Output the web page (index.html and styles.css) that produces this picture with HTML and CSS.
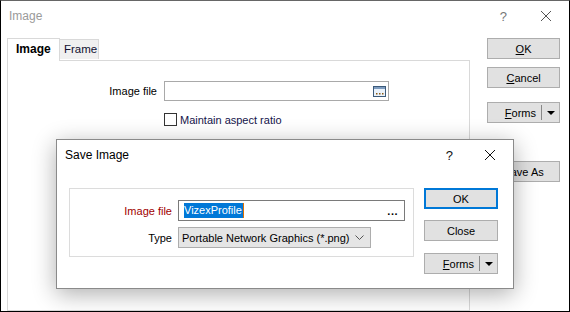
FILE: index.html
```html
<!DOCTYPE html>
<html lang="en">
<head>
  <meta charset="UTF-8" />
  <title>Image</title>
  <link rel="stylesheet" href="styles.css">
</head>
<body>
  <div class="window">
    <div class="titlebar">
      <span class="title">Image</span>
      <span class="help">?</span>
      <svg class="close-x" width="12" height="12" viewBox="0 0 12 12"><path d="M1 1L11 11M11 1L1 11" stroke="#555" stroke-width="1"/></svg>
    </div>

    <div class="main">
      <div class="tabs-area">
        <div class="tabs">
          <div class="tab active">Image</div>
          <div class="tab">Frame</div>
        </div>
        <div class="panel">
          <div class="field-row">
            <label class="field-label">Image file</label>
            <div class="file-input">
              <svg class="browse-icon" width="13" height="11" viewBox="0 0 13 11">
                <rect x="0.5" y="0.5" width="12" height="10" fill="#eaf2fb" stroke="#3c5a7a"/>
                <rect x="1" y="1" width="11" height="2" fill="#7e9cbf"/>
                <rect x="3" y="7" width="1.5" height="1.5" fill="#8a5a12"/>
                <rect x="6" y="7" width="1.5" height="1.5" fill="#8a5a12"/>
                <rect x="9" y="7" width="1.5" height="1.5" fill="#8a5a12"/>
              </svg>
            </div>
          </div>
          <div class="check-row">
            <span class="checkbox"></span>
            <span class="check-label">Maintain aspect ratio</span>
          </div>
        </div>
      </div>

      <div class="side-buttons">
        <div class="btn btn-ok"><u>O</u>K</div>
        <div class="btn btn-cancel"><u>C</u>ancel</div>
        <div class="split-btn">
          <span class="split-text"><u>F</u>orms</span>
          <span class="split-arrow"></span>
        </div>
        <div class="btn btn-saveas">Save As</div>
      </div>
    </div>

    <div class="modal">
      <div class="titlebar modal-titlebar">
        <span class="title modal-title">Save Image</span>
        <span class="help modal-help">?</span>
        <svg class="close-x" width="12" height="12" viewBox="0 0 12 12"><path d="M1 1L11 11M11 1L1 11" stroke="#111" stroke-width="1"/></svg>
      </div>
      <div class="modal-body">
        <div class="group">
          <div class="group-row">
            <label class="group-label required">Image file</label>
            <div class="text-input">
              <span class="selected">VizexProfile</span><span class="caret"></span>
              <span class="dots">...</span>
            </div>
          </div>
          <div class="group-row">
            <label class="group-label">Type</label>
            <div class="select">
              <span>Portable Network Graphics (*.png)</span>
              <svg class="chevron" width="9" height="5" viewBox="0 0 9 5"><path d="M0.5 0.5L4.5 4.5L8.5 0.5" fill="none" stroke="#555"/></svg>
            </div>
          </div>
        </div>
        <div class="modal-buttons">
          <div class="btn default">OK</div>
          <div class="btn">Close</div>
          <div class="split-btn modal-split">
            <span class="split-text"><u>F</u>orms</span>
            <span class="split-arrow"></span>
          </div>
        </div>
      </div>
    </div>
  </div>
</body>
</html>
```

FILE: styles.css
```css
* {
  margin: 0;
  padding: 0;
  box-sizing: border-box;
}

body {
  font-family: 'Liberation Sans', Arial, sans-serif;
  font-size: 11px;
  color: #000;
  background: #fff;
}

.window {
  position: relative;
  width: 570px;
  height: 312px;
  border: 1px solid #000;
  border-top-color: #666;
  background: #fff;
  overflow: hidden;
}

/* title bars */
.titlebar {
  display: flex;
  align-items: center;
  height: 30px;
  padding-left: 8px;
}

.title {
  flex: 1;
  font-size: 12px;
  color: #9a9a9a;
}

.help {
  font-size: 13px;
  color: #777;
  margin-right: 33px;
}

.close-x {
  margin-right: 17px;
}

/* main dialog */
.main {
  display: flex;
  height: 280px;
  padding: 7px 9px 0 6px;
}

.tabs-area {
  display: flex;
  flex-direction: column;
  width: 464px;
}

.tabs {
  display: flex;
  align-items: flex-end;
  height: 22px;
  position: relative;
  z-index: 1;
}

.tab {
  height: 20px;
  width: 39px;
  padding: 3px 0 0 4px;
  border: 1px solid #d9d9d9;
  border-bottom: none;
  border-left: none;
  background: #f0f0f0;
  color: #101030;
  font-size: 11.5px;
  margin-bottom: 1px;
}

.tab.active {
  height: 23px;
  width: 53px;
  padding: 3px 0 0 8px;
  border-left: 1px solid #d9d9d9;
  background: #fff;
  font-weight: bold;
  font-size: 12px;
  color: #000;
  margin-bottom: -1px;
}

.panel {
  flex: 1;
  border: 1px solid #d9d9d9;
  background: #fff;
  padding-top: 20px;
}

.field-row {
  display: flex;
  align-items: center;
}

.field-label {
  width: 149px;
  text-align: right;
  margin-right: 7px;
}

.file-input {
  display: flex;
  align-items: center;
  justify-content: flex-end;
  width: 225px;
  height: 20px;
  border: 1px solid #a9a9a9;
  padding-right: 2px;
}

.check-row {
  display: flex;
  align-items: center;
  margin: 12px 0 0 156px;
  color: #14144a;
}

.checkbox {
  width: 13px;
  height: 13px;
  border: 1px solid #333;
  margin-right: 3px;
}

/* buttons */
.side-buttons {
  display: flex;
  flex-direction: column;
  width: 73px;
  margin-left: 17px;
}

.btn {
  height: 21px;
  display: flex;
  align-items: center;
  justify-content: center;
  background: #e1e1e1;
  border: 1px solid #adadad;
}

.btn-cancel {
  margin-top: 8px;
}

.btn-saveas {
  margin-top: 38px;
}

.split-btn {
  display: flex;
  align-items: center;
  height: 21px;
  margin-top: 14px;
  background: #e1e1e1;
  border: 1px solid #adadad;
}

.split-text {
  flex: 1;
  text-align: right;
  padding-right: 5px;
}

.split-arrow {
  width: 18px;
  height: 15px;
  border-left: 1px solid #888;
  position: relative;
}

.split-arrow::after {
  content: '';
  position: absolute;
  left: 5px;
  top: 6px;
  border-left: 4px solid transparent;
  border-right: 4px solid transparent;
  border-top: 4px solid #000;
}

/* save image dialog */
.modal {
  position: absolute;
  left: 55px;
  top: 138px;
  width: 458px;
  height: 150px;
  background: #fff;
  border: 1px solid #8a8a8a;
  box-shadow: 0 5px 22px rgba(0, 0, 0, 0.32);
}

.modal-titlebar {
  height: 30px;
}

.modal-title {
  color: #000;
}

.modal-help {
  color: #111;
  margin-right: 31px;
}

.modal-body {
  display: flex;
  padding: 18px 0 0 12px;
}

.group {
  width: 345px;
  height: 69px;
  border: 1px solid #dcdcdc;
  padding-top: 11px;
}

.group-row {
  display: flex;
  align-items: center;
  margin-bottom: 6px;
}

.group-label {
  width: 102px;
  text-align: right;
  margin-right: 6px;
}

.group-label.required {
  color: #a00000;
}

.text-input {
  display: flex;
  align-items: center;
  width: 227px;
  height: 21px;
  border: 1px solid #7a7a7a;
  padding-left: 5px;
}

.selected {
  background: #0078d7;
  color: #fff;
  line-height: 15px;
  padding-right: 1px;
}

.caret {
  width: 1px;
  height: 15px;
  background: #e07000;
}

.dots {
  margin-left: auto;
  margin-right: 6px;
  font-weight: bold;
  letter-spacing: 0.5px;
}

.select {
  display: flex;
  align-items: center;
  width: 193px;
  height: 21px;
  background: #e5e5e5;
  border: 1px solid #adadad;
  padding: 0 6px 0 3px;
}

.select span {
  flex: 1;
}

.modal-buttons {
  display: flex;
  flex-direction: column;
  width: 74px;
  margin-left: 10px;
}

.modal-buttons .btn + .btn {
  margin-top: 11px;
}

.btn.default {
  border: 2px solid #0078d7;
}

.modal-split {
  margin-top: 12px;
}
```
